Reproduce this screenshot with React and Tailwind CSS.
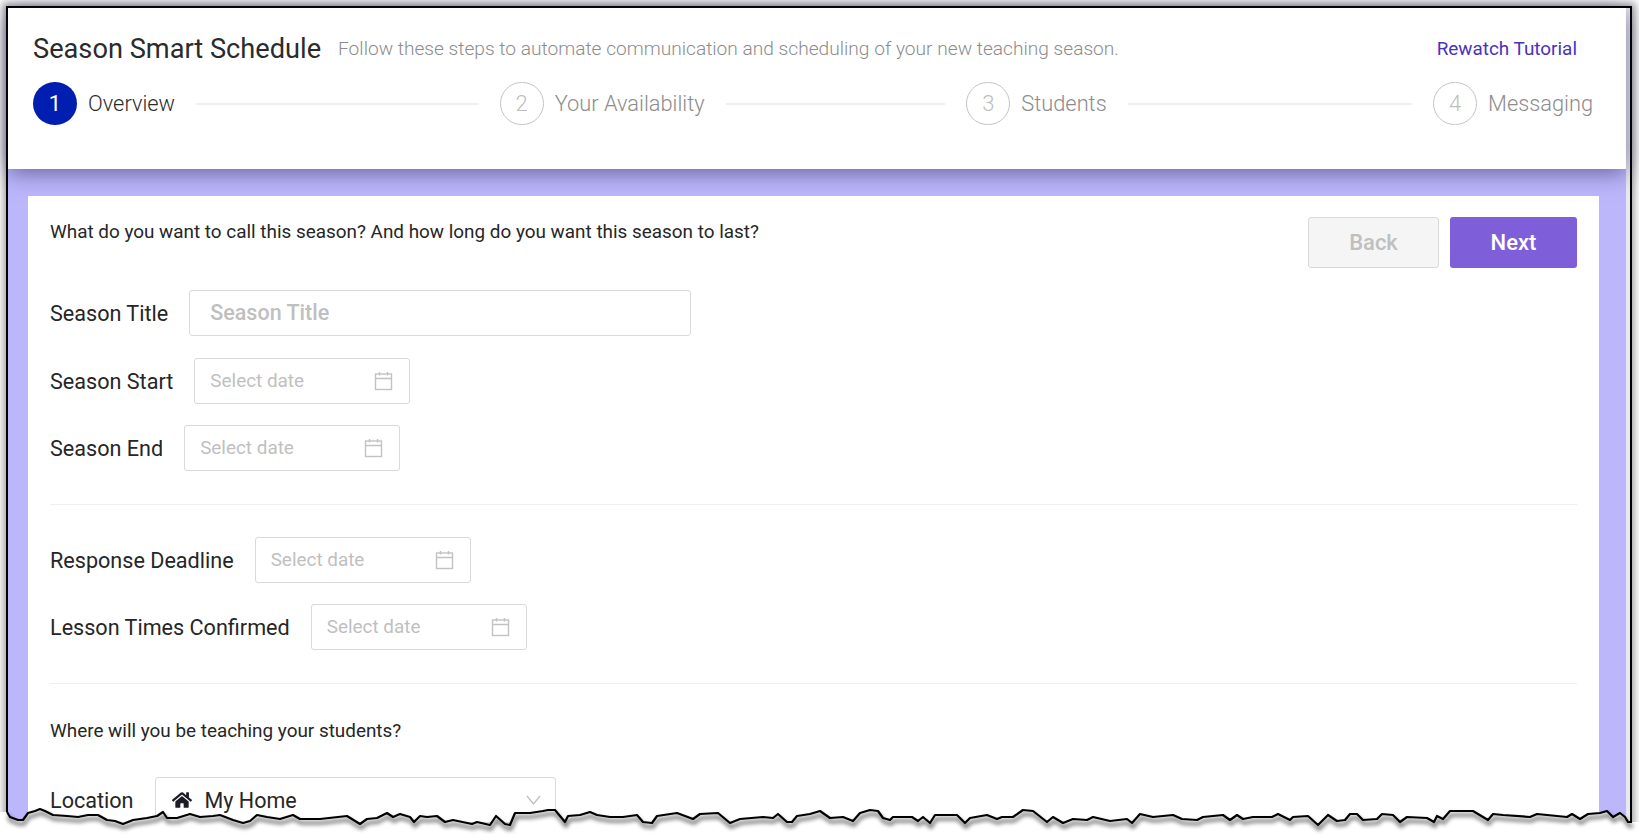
import React from "react";
import { FaHome } from "react-icons/fa";

const tornEdge =
  "M7,812 10,817 18,820 23,820 28,813 35,811 40,809 45,811 53,815 67,816 78,817 88,815 98,815 107,820 115,821 123,824 133,820 147,818 157,816 163,812 167,818 177,818 190,814 200,817 213,816 220,815 233,820 243,823 250,821 257,815 267,817 280,819 293,815 300,819 320,819 347,816 360,824 367,819 377,818 387,813 393,817 400,814 410,817 414,822 420,816 427,817 437,816 445,822 453,820 472,824 477,822 490,825 496,816 505,824 510,825 515,813 530,813 543,811 548,810 555,810 565,822 568,816 580,815 590,812 597,815 610,817 623,817 637,815 643,822 652,823 657,816 677,813 693,819 700,814 718,813 730,823 740,819 763,817 773,818 778,814 787,822 792,822 797,816 810,814 820,811 830,818 843,817 853,821 860,813 870,810 878,811 883,818 890,820 893,817 912,817 918,821 923,817 930,823 935,815 957,815 965,823 970,818 987,815 997,819 1002,817 1013,817 1023,810 1033,811 1047,822 1053,817 1063,823 1073,819 1087,820 1093,817 1110,821 1127,819 1132,823 1140,814 1153,817 1173,815 1182,819 1197,820 1203,817 1223,815 1230,820 1237,815 1243,819 1253,817 1272,817 1278,814 1290,820 1293,817 1308,816 1318,825 1328,815 1337,821 1345,820 1350,814 1357,814 1363,820 1377,819 1382,814 1393,815 1400,822 1407,817 1427,818 1434,822 1437,816 1443,819 1450,811 1457,811 1473,811 1488,820 1493,814 1503,815 1530,817 1537,814 1567,817 1572,814 1580,819 1588,814 1600,813 1607,811 1613,817 1620,813 1625,817 1628,822 1632,822";

const CalendarIcon = () => (
  <svg width="19" height="20" viewBox="0 0 19 20" fill="none" stroke="#c2c2c2" strokeWidth="1.4" className="shrink-0">
    <rect x="1.5" y="3" width="16" height="15.5" />
    <path d="M1.5 7.5h16M5.5 1v3.5M13.5 1v3.5" />
  </svg>
);

const DateField = () => (
  <div className="flex h-[46px] w-[216px] items-center justify-between rounded-[3px] border border-[#d9d9d9] bg-white pl-[15px] pr-[16px]">
    <span className="text-[18.9px] leading-[24px] text-[#bfbfbf]">Select date</span>
    <CalendarIcon />
  </div>
);

const FieldRow = ({ label, className = "", children }) => (
  <div className={`flex items-center gap-[21px] ${className}`}>
    <span className="pt-[2px] text-[21.6px] leading-[28px] text-[#262626]">{label}</span>
    {children}
  </div>
);

const Step = ({ num, label, active, last }) => (
  <div className={`flex items-center ${last ? "flex-none" : "flex-1"}`}>
    <div
      className={
        active
          ? "flex h-[43px] w-[44px] shrink-0 items-center justify-center rounded-full bg-[#001eb0] text-[22px] text-white"
          : "flex h-[43px] w-[44px] shrink-0 items-center justify-center rounded-full border border-[#c4c4c4] text-[22px] font-light text-[#bdbdbd]"
      }
    >
      {num}
    </div>
    <span className={`ml-[11px] pt-[2px] text-[21.8px] font-light ${active ? "text-[#2b2b2b]" : "text-[#8c8c8c]"}`}>{label}</span>
    {!last && <div className="ml-[21px] mr-[21px] h-[2px] flex-1 bg-[#f0f0f0]" />}
  </div>
);

export default function App() {
  return (
    <div className="relative h-[834px] w-[1639px] overflow-hidden bg-white font-['Roboto',sans-serif]">
      <div className="ml-[6px] mt-[6px] flex h-[840px] w-[1626px] border-2 border-black shadow-[0_0_7px_3px_rgba(0,0,0,0.35)]">
        <div className="flex min-w-0 flex-1 flex-col">
          <header className="relative z-10 h-[161px] shrink-0 bg-white pl-[25px] pr-[33px] pt-[23px] shadow-[0_3px_22px_rgba(20,16,70,0.55)]">
            <div className="flex h-[36px] items-center">
              <h1 className="text-[27.2px] font-normal text-[#2b2b2b]">Season Smart Schedule</h1>
              <p className="ml-[17px] text-[19.15px] font-light text-[#8c8c8c]">
                Follow these steps to automate communication and scheduling of your new teaching season.
              </p>
              <a className="ml-auto mr-[16px] text-[18.9px] text-[#4a32c0]">Rewatch Tutorial</a>
            </div>
            <div className="mt-[15px] flex items-center">
              <Step num="1" label="Overview" active />
              <Step num="2" label="Your Availability" />
              <Step num="3" label="Students" />
              <Step num="4" label="Messaging" last />
            </div>
          </header>

          <main className="flex-1 bg-[#bcb7fb] pb-0 pl-[20px] pr-[27px] pt-[27px]">
            <div className="h-full bg-white pl-[22px] pr-[22px] pt-[21px]">
              <div className="flex items-start justify-between">
                <p className="mt-[3px] text-[18.9px] leading-[24px] text-[#262626]">
                  What do you want to call this season? And how long do you want this season to last?
                </p>
                <div className="flex gap-[11px]">
                  <button className="h-[51px] w-[131px] rounded-[3px] border border-[#d9d9d9] bg-[#f5f5f5] text-[22px] font-medium text-[#bfbfbf]">
                    Back
                  </button>
                  <button className="h-[51px] w-[127px] rounded-[3px] bg-[#7f5fd9] text-[22px] font-medium text-white">
                    Next
                  </button>
                </div>
              </div>

              <FieldRow label="Season Title" className="mt-[22px]">
                <input
                  readOnly
                  placeholder="Season Title"
                  className="h-[46px] w-[502px] rounded-[3px] border border-[#d9d9d9] bg-white px-[20px] pb-[2px] text-[21.5px] font-medium outline-none placeholder:text-[#bfbfbf]"
                />
              </FieldRow>
              <FieldRow label="Season Start" className="mt-[22px]">
                <DateField />
              </FieldRow>
              <FieldRow label="Season End" className="mt-[21px]">
                <DateField />
              </FieldRow>

              <div className="mt-[33px] h-px bg-[#eeeeee]" />

              <FieldRow label="Response Deadline" className="mt-[32px]">
                <DateField />
              </FieldRow>
              <FieldRow label="Lesson Times Confirmed" className="mt-[21px]">
                <DateField />
              </FieldRow>

              <div className="mt-[33px] h-px bg-[#eeeeee]" />

              <p className="mt-[35px] text-[18.9px] leading-[24px] text-[#262626]">Where will you be teaching your students?</p>

              <FieldRow label="Location" className="mt-[34px]">
                <div className="flex h-[46px] w-[401px] items-center rounded-[3px] border border-[#d9d9d9] bg-white pl-[16px] pr-[14px]">
                  <FaHome className="h-[20px] w-[20px] text-[#1c1c28]" />
                  <span className="ml-[13px] pt-[2px] text-[21.5px] text-[#262626]">My Home</span>
                  <svg width="15" height="10" viewBox="0 0 15 10" fill="none" stroke="#bfbfbf" strokeWidth="1.3" className="ml-auto">
                    <path d="M1 1l6.5 8L14 1" />
                  </svg>
                </div>
              </FieldRow>
            </div>
          </main>
        </div>
        <div className="w-[4px] shrink-0 bg-[#e9e9f2]" />
      </div>

      {/* torn bottom edge of the screenshot frame */}
      <svg className="absolute left-0 top-0 z-20" width="1639" height="834" viewBox="0 0 1639 834" fill="none">
        <defs>
          <filter id="tornBlur" x="-2%" y="-50%" width="104%" height="200%">
            <feGaussianBlur stdDeviation="2" />
          </filter>
        </defs>
        <path d={`${tornEdge} L1639,822 L1639,834 L0,834 L0,812 Z`} fill="white" />
        <path d={tornEdge} stroke="#000" strokeOpacity="0.7" strokeWidth="2.5" filter="url(#tornBlur)" transform="translate(1 4)" />
        <path d={tornEdge} stroke="#000" strokeWidth="2.2" strokeLinejoin="round" />
      </svg>
    </div>
  );
}
